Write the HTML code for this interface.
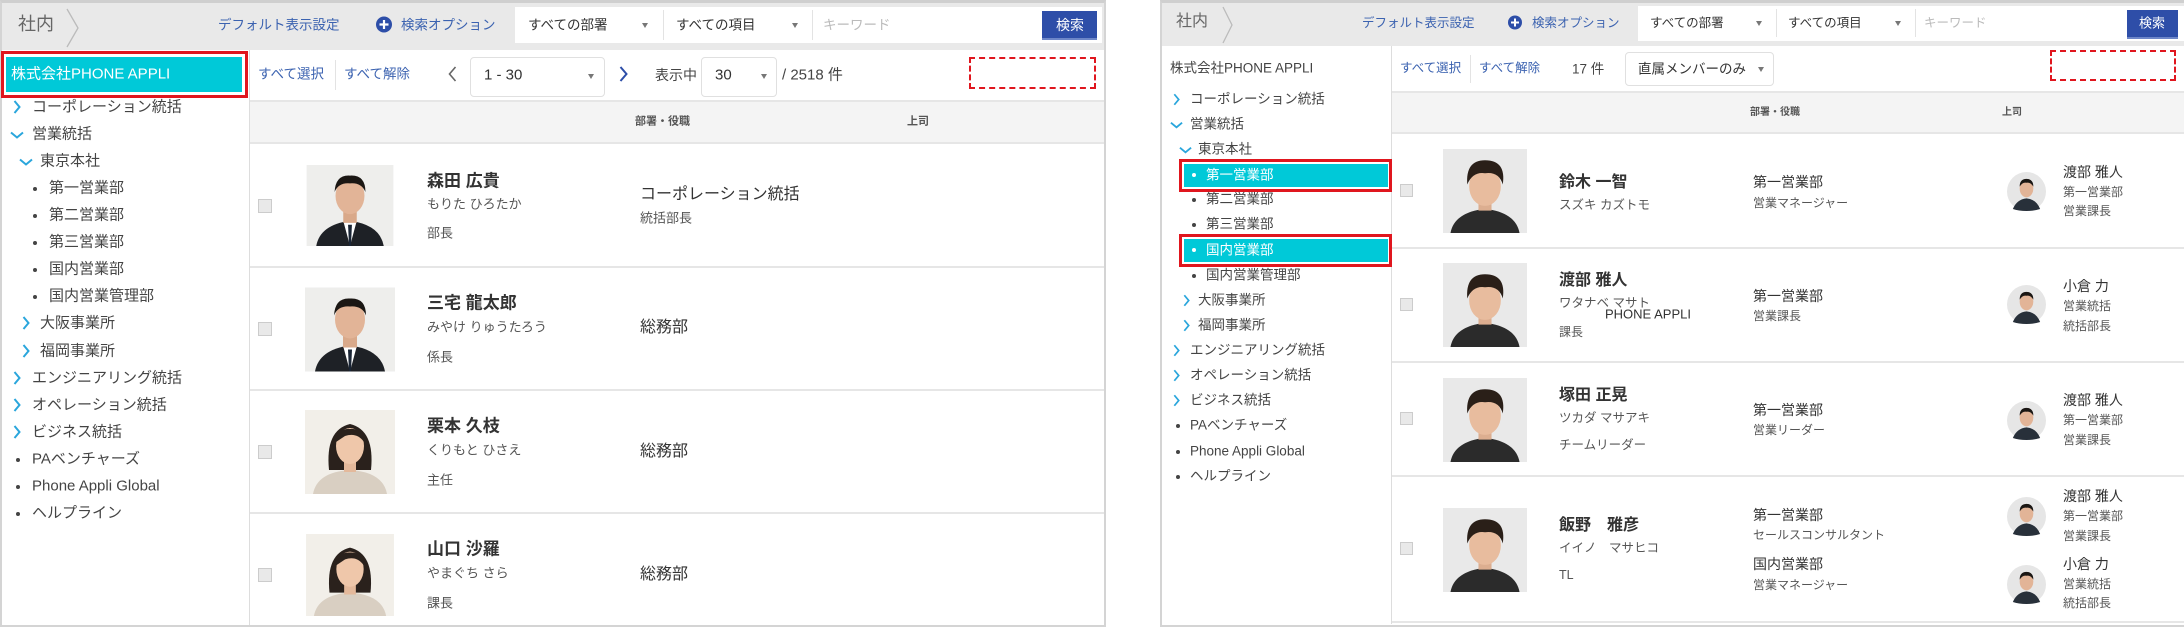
<!DOCTYPE html>
<html><head><meta charset="utf-8"><style>
*{margin:0;padding:0;box-sizing:border-box}
body{width:2184px;height:627px;background:#fff;position:relative;overflow:hidden;font-family:"Liberation Sans","Noto Sans CJK JP",sans-serif;color:#444}
.a{position:absolute}
.t{position:absolute;white-space:nowrap;line-height:1;transform:translateY(-50%)}
.blue{color:#3b62b0}
.b{font-weight:bold;color:#333}
.r{position:absolute;border:2px dashed #e0161e}
.rb{position:absolute;border:3px solid #e0161e;background:#fff}
.cy{position:absolute;background:#00c9d8}
.dot{position:absolute;width:4px;height:4px;border-radius:2px;background:#444}
.cb{position:absolute;width:14px;height:14px;border:1px solid #ccc;background:#e9e9e9}
.line{position:absolute;height:2px;background:#e6e6e6}
.tri{position:absolute;width:0;height:0;border-left:3px solid transparent;border-right:3px solid transparent;border-top:5px solid #777}
.L{font-size:15px}
.R{font-size:13.5px}
</style></head><body>
<svg width="0" height="0" style="position:absolute">
<defs>
<symbol id="ch" viewBox="0 0 8 14"><polyline points="1.5,1 6.5,7 1.5,13" fill="none" stroke="#2aa6dc" stroke-width="2"/></symbol>
<symbol id="dn" viewBox="0 0 14 8"><polyline points="1,1.5 7,6.5 13,1.5" fill="none" stroke="#2aa6dc" stroke-width="2"/></symbol>
<symbol id="man" viewBox="0 0 90 84"><rect width="90" height="84" fill="#eeeeec"/><path d="M10 84 Q14 62 45 58 Q76 62 80 84Z" fill="#1e2126"/><path d="M38 58 L45 84 L52 58Z" fill="#fff"/><path d="M43 62 L47 62 L46 84 L44 84Z" fill="#1a2535"/><rect x="38" y="44" width="14" height="16" fill="#d9a98a"/><ellipse cx="45" cy="32" rx="15" ry="19" fill="#e2b497"/><path d="M29 28 Q30 10 45 11 Q61 10 61 28 Q57 18 45 19 Q33 18 29 28Z" fill="#1b1714"/></symbol>
<symbol id="wom" viewBox="0 0 90 84"><rect width="90" height="84" fill="#f2efe9"/><path d="M24 60 Q20 20 45 14 Q70 20 66 60Z" fill="#2a211c"/><path d="M8 84 Q12 62 45 60 Q78 62 82 84Z" fill="#d9cfc2"/><rect x="39" y="46" width="12" height="16" fill="#e4b99b"/><ellipse cx="45" cy="36" rx="14" ry="18" fill="#efc7aa"/><path d="M31 32 Q33 18 45 19 Q58 18 59 32 Q52 22 40 26Z" fill="#2a211c"/></symbol>
<symbol id="boy" viewBox="0 0 90 90"><rect width="90" height="90" fill="#e9e9e9"/><path d="M8 90 Q12 68 45 64 Q78 68 82 90Z" fill="#2b2b2b"/><rect x="38" y="50" width="14" height="16" fill="#dcae90"/><ellipse cx="45" cy="40" rx="17" ry="21" fill="#e8bc9e"/><path d="M26 38 Q24 12 45 12 Q68 12 64 38 Q60 24 45 26 Q32 24 26 38Z" fill="#2a1f18"/></symbol>
<symbol id="av" viewBox="0 0 40 40"><circle cx="20" cy="20" r="20" fill="#e6e6e6"/><path d="M6 38 Q10 28 20 27 Q30 28 34 38 Q28 40 20 40 Q12 40 6 38Z" fill="#28303a"/><ellipse cx="20" cy="17" rx="7" ry="9" fill="#e2b497"/><path d="M13 15 Q13 7 20 7 Q27 7 27 15 Q24 10 20 11 Q16 10 13 15Z" fill="#1b1714"/></symbol>
</defs></svg>

<!-- ============ LEFT PANEL ============ -->
<div class="a" style="left:0;top:0;width:1106px;height:627px;border:2px solid #d4d4d4;border-top:3px solid #cfcfcf"></div>
<div class="a" style="left:2px;top:3px;width:1102px;height:47px;background:#e9e9e9"></div>
<div class="t" style="left:18px;top:24px;font-size:18px;color:#666">社内</div>
<svg class="a" style="left:66px;top:8px" width="14" height="40"><polyline points="1,1 12,20 1,39" fill="none" stroke="#bbb" stroke-width="1.3"/></svg>
<div class="t blue" style="left:218px;top:25px;font-size:13.5px">デフォルト表示設定</div>
<svg class="a" style="left:376px;top:16px" width="16" height="17"><circle cx="8" cy="8.5" r="8" fill="#2d4ea8"/><path d="M8 4v9M3.5 8.5h9" stroke="#fff" stroke-width="2.2"/></svg>
<div class="t blue" style="left:401px;top:25px;font-size:13.5px">検索オプション</div>
<div class="a" style="left:515px;top:7px;width:587px;height:36px;background:#fff"></div>
<div class="t" style="left:528px;top:25px;font-size:13.5px;color:#333">すべての部署</div>
<div class="tri" style="left:642px;top:23px"></div>
<div class="a" style="left:663px;top:10px;width:1px;height:30px;background:#e3e3e3"></div>
<div class="t" style="left:676px;top:25px;font-size:13.5px;color:#333">すべての項目</div>
<div class="tri" style="left:792px;top:23px"></div>
<div class="a" style="left:812px;top:10px;width:1px;height:30px;background:#e3e3e3"></div>
<div class="t" style="left:823px;top:25px;font-size:13.5px;color:#bbb">キーワード</div>
<div class="a" style="left:1042px;top:11px;width:55px;height:29px;background:#2e4ea8;border-bottom:2px solid #6d86c8"></div>
<div class="t" style="left:1056px;top:25px;font-size:14px;color:#fff">検索</div>

<!-- left sidebar -->
<div class="a" style="left:249px;top:50px;width:1px;height:575px;background:#ddd"></div>
<div class="rb" style="left:1px;top:51px;width:247px;height:47px"></div>
<div class="cy" style="left:6px;top:57px;width:236px;height:35px"></div>
<div class="t" style="left:11px;top:74px;font-size:15px;color:#fff">株式会社PHONE APPLI</div>

<svg class="a" style="left:13px;top:100px" width="8" height="14"><use href="#ch"/></svg>
<div class="t L" style="left:32px;top:107px">コーポレーション統括</div>
<svg class="a" style="left:10px;top:131px" width="14" height="8"><use href="#dn"/></svg>
<div class="t L" style="left:32px;top:134px">営業統括</div>
<svg class="a" style="left:19px;top:158px" width="14" height="8"><use href="#dn"/></svg>
<div class="t L" style="left:40px;top:161px">東京本社</div>
<div class="dot" style="left:33px;top:187px"></div><div class="t L" style="left:49px;top:188px">第一営業部</div>
<div class="dot" style="left:33px;top:214px"></div><div class="t L" style="left:49px;top:215px">第二営業部</div>
<div class="dot" style="left:33px;top:241px"></div><div class="t L" style="left:49px;top:242px">第三営業部</div>
<div class="dot" style="left:33px;top:268px"></div><div class="t L" style="left:49px;top:269px">国内営業部</div>
<div class="dot" style="left:33px;top:295px"></div><div class="t L" style="left:49px;top:296px">国内営業管理部</div>
<svg class="a" style="left:22px;top:316px" width="8" height="14"><use href="#ch"/></svg>
<div class="t L" style="left:40px;top:323px">大阪事業所</div>
<svg class="a" style="left:22px;top:344px" width="8" height="14"><use href="#ch"/></svg>
<div class="t L" style="left:40px;top:351px">福岡事業所</div>
<svg class="a" style="left:13px;top:371px" width="8" height="14"><use href="#ch"/></svg>
<div class="t L" style="left:32px;top:378px">エンジニアリング統括</div>
<svg class="a" style="left:13px;top:398px" width="8" height="14"><use href="#ch"/></svg>
<div class="t L" style="left:32px;top:405px">オペレーション統括</div>
<svg class="a" style="left:13px;top:425px" width="8" height="14"><use href="#ch"/></svg>
<div class="t L" style="left:32px;top:432px">ビジネス統括</div>
<div class="dot" style="left:16px;top:458px"></div><div class="t L" style="left:32px;top:459px">PAベンチャーズ</div>
<div class="dot" style="left:16px;top:485px"></div><div class="t L" style="left:32px;top:486px">Phone Appli Global</div>
<div class="dot" style="left:16px;top:512px"></div><div class="t L" style="left:32px;top:513px">ヘルプライン</div>

<!-- left toolbar -->
<div class="t blue" style="left:258px;top:74px;font-size:13.5px">すべて選択</div>
<div class="a" style="left:335px;top:60px;width:1px;height:30px;background:#e3e3e3"></div>
<div class="t blue" style="left:344px;top:74px;font-size:13.5px">すべて解除</div>
<svg class="a" style="left:448px;top:66px" width="9" height="16"><polyline points="7.5,1 1.5,8 7.5,15" fill="none" stroke="#666" stroke-width="1.6"/></svg>
<div class="a" style="left:470px;top:57px;width:135px;height:40px;border:1px solid #e0e0e0;border-radius:4px"></div>
<div class="t" style="left:484px;top:75px;font-size:15px;color:#333">1 - 30</div>
<div class="tri" style="left:588px;top:74px"></div>
<svg class="a" style="left:619px;top:66px" width="9" height="16"><polyline points="1.5,1 7.5,8 1.5,15" fill="none" stroke="#2d4ea8" stroke-width="2"/></svg>
<div class="t" style="left:655px;top:75px;font-size:14px;color:#444">表示中</div>
<div class="a" style="left:701px;top:57px;width:76px;height:40px;border:1px solid #e0e0e0;border-radius:4px"></div>
<div class="t" style="left:715px;top:75px;font-size:15px;color:#333">30</div>
<div class="tri" style="left:761px;top:74px"></div>
<div class="t" style="left:782px;top:75px;font-size:15px;color:#444">/ 2518 件</div>
<div class="r" style="left:969px;top:57px;width:127px;height:32px"></div>

<div class="a" style="left:250px;top:100px;width:854px;height:44px;background:#f4f4f4;border-top:2px solid #e6e6e6;border-bottom:2px solid #e6e6e6"></div>
<div class="t b" style="left:635px;top:122px;font-size:11px;color:#555">部署・役職</div>
<div class="t b" style="left:907px;top:122px;font-size:11px;color:#555">上司</div>

<!-- left rows -->
<div class="line" style="left:250px;top:266px;width:854px"></div>
<div class="line" style="left:250px;top:389px;width:854px"></div>
<div class="line" style="left:250px;top:512px;width:854px"></div>

<div class="cb" style="left:258px;top:199px"></div>
<svg class="a" style="left:305px;top:165px" width="90" height="81"><use href="#man"/></svg>
<div class="t b" style="left:427px;top:181px;font-size:17px">森田 広貴</div>
<div class="t" style="left:427px;top:204px;font-size:13px;color:#555">もりた ひろたか</div>
<div class="t" style="left:427px;top:233px;font-size:13px;color:#555">部長</div>
<div class="t" style="left:640px;top:195px;font-size:16px;color:#333">コーポレーション統括</div>
<div class="t" style="left:640px;top:218px;font-size:13px;color:#555">統括部長</div>

<div class="cb" style="left:258px;top:322px"></div>
<svg class="a" style="left:305px;top:286px" width="90" height="87"><use href="#man"/></svg>
<div class="t b" style="left:427px;top:303px;font-size:17px">三宅 龍太郎</div>
<div class="t" style="left:427px;top:327px;font-size:13px;color:#555">みやけ りゅうたろう</div>
<div class="t" style="left:427px;top:357px;font-size:13px;color:#555">係長</div>
<div class="t" style="left:640px;top:328px;font-size:16px;color:#333">総務部</div>

<div class="cb" style="left:258px;top:445px"></div>
<svg class="a" style="left:305px;top:407px" width="90" height="90"><use href="#wom"/></svg>
<div class="t b" style="left:427px;top:426px;font-size:17px">栗本 久枝</div>
<div class="t" style="left:427px;top:450px;font-size:13px;color:#555">くりもと ひさえ</div>
<div class="t" style="left:427px;top:480px;font-size:13px;color:#555">主任</div>
<div class="t" style="left:640px;top:452px;font-size:16px;color:#333">総務部</div>

<div class="cb" style="left:258px;top:568px"></div>
<svg class="a" style="left:305px;top:534px" width="90" height="82"><use href="#wom"/></svg>
<div class="t b" style="left:427px;top:549px;font-size:17px">山口 沙羅</div>
<div class="t" style="left:427px;top:573px;font-size:13px;color:#555">やまぐち さら</div>
<div class="t" style="left:427px;top:603px;font-size:13px;color:#555">課長</div>
<div class="t" style="left:640px;top:575px;font-size:16px;color:#333">総務部</div>

<!-- ============ RIGHT PANEL ============ -->
<div class="a" style="left:1160px;top:0;width:1024px;height:627px;border:2px solid #d4d4d4;border-top:3px solid #cfcfcf;border-right:none"></div>
<div class="a" style="left:1162px;top:3px;width:1022px;height:43px;background:#e9e9e9"></div>
<div class="t" style="left:1176px;top:22px;font-size:16px;color:#666">社内</div>
<svg class="a" style="left:1222px;top:6px" width="12" height="38"><polyline points="1,1 10,19 1,37" fill="none" stroke="#bbb" stroke-width="1.3"/></svg>
<div class="t blue" style="left:1362px;top:23px;font-size:12.5px">デフォルト表示設定</div>
<svg class="a" style="left:1508px;top:15px" width="14" height="15"><circle cx="7" cy="7.5" r="7" fill="#2d4ea8"/><path d="M7 3.5v8M3 7.5h8" stroke="#fff" stroke-width="2"/></svg>
<div class="t blue" style="left:1532px;top:23px;font-size:12.5px">検索オプション</div>
<div class="a" style="left:1638px;top:6px;width:546px;height:35px;background:#fff"></div>
<div class="t" style="left:1650px;top:23px;font-size:12.5px;color:#333">すべての部署</div>
<div class="tri" style="left:1756px;top:21px"></div>
<div class="a" style="left:1776px;top:9px;width:1px;height:28px;background:#e3e3e3"></div>
<div class="t" style="left:1788px;top:23px;font-size:12.5px;color:#333">すべての項目</div>
<div class="tri" style="left:1895px;top:21px"></div>
<div class="a" style="left:1915px;top:9px;width:1px;height:28px;background:#e3e3e3"></div>
<div class="t" style="left:1924px;top:23px;font-size:12.5px;color:#bbb">キーワード</div>
<div class="a" style="left:2127px;top:10px;width:51px;height:29px;background:#2e4ea8;border-bottom:2px solid #6d86c8"></div>
<div class="t" style="left:2139px;top:23px;font-size:13px;color:#fff">検索</div>

<!-- right sidebar -->
<div class="a" style="left:1391px;top:46px;width:1px;height:578px;background:#ddd"></div>
<div class="t" style="left:1170px;top:68px;font-size:13.5px;color:#444">株式会社PHONE APPLI</div>
<svg class="a" style="left:1173px;top:93px" width="7" height="13"><use href="#ch"/></svg>
<div class="t R" style="left:1190px;top:99px">コーポレーション統括</div>
<svg class="a" style="left:1170px;top:121px" width="13" height="8"><use href="#dn"/></svg>
<div class="t R" style="left:1190px;top:124px">営業統括</div>
<svg class="a" style="left:1179px;top:146px" width="13" height="8"><use href="#dn"/></svg>
<div class="t R" style="left:1198px;top:149px">東京本社</div>
<div class="rb" style="left:1179px;top:159px;width:213px;height:33px"></div>
<div class="cy" style="left:1184px;top:164px;width:204px;height:23px"></div>
<div class="dot" style="left:1192px;top:173px;background:#fff"></div><div class="t R" style="left:1206px;top:175px;color:#fff">第一営業部</div>
<div class="dot" style="left:1192px;top:198px"></div><div class="t R" style="left:1206px;top:199px">第二営業部</div>
<div class="dot" style="left:1192px;top:223px"></div><div class="t R" style="left:1206px;top:224px">第三営業部</div>
<div class="rb" style="left:1179px;top:234px;width:213px;height:33px"></div>
<div class="cy" style="left:1184px;top:239px;width:204px;height:23px"></div>
<div class="dot" style="left:1192px;top:248px;background:#fff"></div><div class="t R" style="left:1206px;top:250px;color:#fff">国内営業部</div>
<div class="dot" style="left:1192px;top:274px"></div><div class="t R" style="left:1206px;top:275px">国内営業管理部</div>
<svg class="a" style="left:1183px;top:294px" width="7" height="13"><use href="#ch"/></svg>
<div class="t R" style="left:1198px;top:300px">大阪事業所</div>
<svg class="a" style="left:1183px;top:319px" width="7" height="13"><use href="#ch"/></svg>
<div class="t R" style="left:1198px;top:325px">福岡事業所</div>
<svg class="a" style="left:1173px;top:344px" width="7" height="13"><use href="#ch"/></svg>
<div class="t R" style="left:1190px;top:350px">エンジニアリング統括</div>
<svg class="a" style="left:1173px;top:369px" width="7" height="13"><use href="#ch"/></svg>
<div class="t R" style="left:1190px;top:375px">オペレーション統括</div>
<svg class="a" style="left:1173px;top:394px" width="7" height="13"><use href="#ch"/></svg>
<div class="t R" style="left:1190px;top:400px">ビジネス統括</div>
<div class="dot" style="left:1176px;top:424px"></div><div class="t R" style="left:1190px;top:425px">PAベンチャーズ</div>
<div class="dot" style="left:1176px;top:450px"></div><div class="t R" style="left:1190px;top:451px">Phone Appli Global</div>
<div class="dot" style="left:1176px;top:475px"></div><div class="t R" style="left:1190px;top:476px">ヘルプライン</div>

<!-- right toolbar -->
<div class="t blue" style="left:1400px;top:68px;font-size:12.5px">すべて選択</div>
<div class="a" style="left:1470px;top:55px;width:1px;height:28px;background:#e3e3e3"></div>
<div class="t blue" style="left:1479px;top:68px;font-size:12.5px">すべて解除</div>
<div class="t" style="left:1572px;top:69px;font-size:13.5px;color:#444">17 件</div>
<div class="a" style="left:1625px;top:52px;width:149px;height:34px;border:1px solid #e0e0e0;border-radius:4px"></div>
<div class="t" style="left:1638px;top:69px;font-size:13.5px;color:#333">直属メンバーのみ</div>
<div class="tri" style="left:1758px;top:67px"></div>
<div class="r" style="left:2050px;top:50px;width:126px;height:31px"></div>

<div class="a" style="left:1392px;top:91px;width:792px;height:43px;background:#f4f4f4;border-top:2px solid #e6e6e6;border-bottom:2px solid #e6e6e6"></div>
<div class="t b" style="left:1750px;top:113px;font-size:10px;color:#555">部署・役職</div>
<div class="t b" style="left:2002px;top:113px;font-size:10px;color:#555">上司</div>

<div class="line" style="left:1392px;top:247px;width:792px"></div>
<div class="line" style="left:1392px;top:361px;width:792px"></div>
<div class="line" style="left:1392px;top:475px;width:792px"></div>
<div class="line" style="left:1392px;top:621px;width:792px"></div>

<!-- row 1 -->
<div class="cb" style="left:1400px;top:184px;width:13px;height:13px"></div>
<svg class="a" style="left:1443px;top:149px" width="84" height="84"><use href="#boy"/></svg>
<div class="t b" style="left:1559px;top:183px;font-size:16px">鈴木 一智</div>
<div class="t" style="left:1559px;top:205px;font-size:12.5px;color:#555">スズキ カズトモ</div>
<div class="t" style="left:1753px;top:182px;font-size:14px;color:#333">第一営業部</div>
<div class="t" style="left:1753px;top:203px;font-size:12px;color:#555">営業マネージャー</div>
<svg class="a" style="left:2007px;top:172px" width="39" height="39"><use href="#av"/></svg>
<div class="t" style="left:2063px;top:172px;font-size:14px;color:#333">渡部 雅人</div>
<div class="t" style="left:2063px;top:192px;font-size:12px;color:#555">第一営業部</div>
<div class="t" style="left:2063px;top:211px;font-size:12px;color:#555">営業課長</div>

<!-- row 2 -->
<div class="cb" style="left:1400px;top:298px;width:13px;height:13px"></div>
<svg class="a" style="left:1443px;top:263px" width="84" height="84"><use href="#boy"/></svg>
<div class="t b" style="left:1559px;top:281px;font-size:16px">渡部 雅人</div>
<div class="t" style="left:1559px;top:303px;font-size:12.5px;color:#555">ワタナベ マサト</div>
<div class="t" style="left:1605px;top:314px;font-size:13px;color:#333">PHONE APPLI</div>
<div class="t" style="left:1559px;top:332px;font-size:12px;color:#555">課長</div>
<div class="t" style="left:1753px;top:296px;font-size:14px;color:#333">第一営業部</div>
<div class="t" style="left:1753px;top:316px;font-size:12px;color:#555">営業課長</div>
<svg class="a" style="left:2007px;top:285px" width="39" height="39"><use href="#av"/></svg>
<div class="t" style="left:2063px;top:286px;font-size:14px;color:#333">小倉 力</div>
<div class="t" style="left:2063px;top:306px;font-size:12px;color:#555">営業統括</div>
<div class="t" style="left:2063px;top:326px;font-size:12px;color:#555">統括部長</div>

<!-- row 3 -->
<div class="cb" style="left:1400px;top:412px;width:13px;height:13px"></div>
<svg class="a" style="left:1443px;top:378px" width="84" height="84"><use href="#boy"/></svg>
<div class="t b" style="left:1559px;top:396px;font-size:16px">塚田 正晃</div>
<div class="t" style="left:1559px;top:418px;font-size:12.5px;color:#555">ツカダ マサアキ</div>
<div class="t" style="left:1559px;top:445px;font-size:12.5px;color:#555">チームリーダー</div>
<div class="t" style="left:1753px;top:410px;font-size:14px;color:#333">第一営業部</div>
<div class="t" style="left:1753px;top:430px;font-size:12px;color:#555">営業リーダー</div>
<svg class="a" style="left:2007px;top:401px" width="39" height="39"><use href="#av"/></svg>
<div class="t" style="left:2063px;top:400px;font-size:14px;color:#333">渡部 雅人</div>
<div class="t" style="left:2063px;top:420px;font-size:12px;color:#555">第一営業部</div>
<div class="t" style="left:2063px;top:440px;font-size:12px;color:#555">営業課長</div>

<!-- row 4 -->
<div class="cb" style="left:1400px;top:542px;width:13px;height:13px"></div>
<svg class="a" style="left:1443px;top:508px" width="84" height="84"><use href="#boy"/></svg>
<div class="t b" style="left:1559px;top:526px;font-size:16px">飯野　雅彦</div>
<div class="t" style="left:1559px;top:548px;font-size:12.5px;color:#555">イイノ　マサヒコ</div>
<div class="t" style="left:1559px;top:575px;font-size:12.5px;color:#555">TL</div>
<div class="t" style="left:1753px;top:515px;font-size:14px;color:#333">第一営業部</div>
<div class="t" style="left:1753px;top:535px;font-size:12px;color:#555">セールスコンサルタント</div>
<div class="t" style="left:1753px;top:564px;font-size:14px;color:#333">国内営業部</div>
<div class="t" style="left:1753px;top:585px;font-size:12px;color:#555">営業マネージャー</div>
<svg class="a" style="left:2007px;top:497px" width="39" height="39"><use href="#av"/></svg>
<div class="t" style="left:2063px;top:496px;font-size:14px;color:#333">渡部 雅人</div>
<div class="t" style="left:2063px;top:516px;font-size:12px;color:#555">第一営業部</div>
<div class="t" style="left:2063px;top:536px;font-size:12px;color:#555">営業課長</div>
<svg class="a" style="left:2007px;top:565px" width="39" height="39"><use href="#av"/></svg>
<div class="t" style="left:2063px;top:564px;font-size:14px;color:#333">小倉 力</div>
<div class="t" style="left:2063px;top:584px;font-size:12px;color:#555">営業統括</div>
<div class="t" style="left:2063px;top:603px;font-size:12px;color:#555">統括部長</div>
</body></html>
